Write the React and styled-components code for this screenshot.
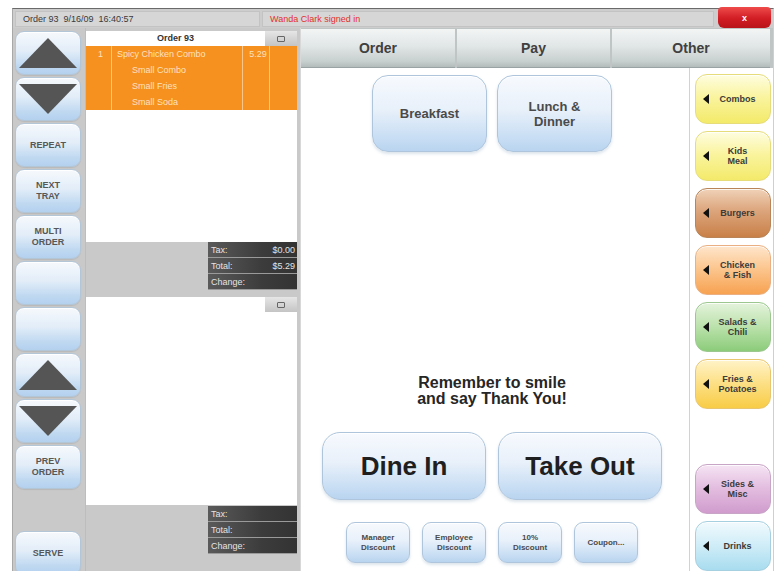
import React from "react";
import styled, { createGlobalStyle } from "styled-components";

const GlobalStyle = createGlobalStyle`
  html, body {
    margin: 0;
    padding: 0;
    background: #fff;
  }
  body {
    font-family: "Liberation Sans", Arial, sans-serif;
  }
  * {
    box-sizing: border-box;
  }
`;

const Screen = styled.div`
  width: 778px;
  height: 571px;
  overflow: hidden;
  background: #fff;
  padding: 8px 4px 0 12px;
`;

const Frame = styled.div`
  height: 100%;
  display: flex;
  flex-direction: column;
  background: #c9c9c9;
  border-top: 1px solid #6a6a6a;
  border-left: 1px solid #a8a8a8;
  border-right: 1px solid #cfcfcf;
`;

// Status line across the top
const StatusBar = styled.div`
  height: 19px;
  flex: none;
  display: flex;
  align-items: center;
  background: #cdcdcd;
`;

const StatusField = styled.div`
  height: 16px;
  width: ${(p) => (p.$grow ? "auto" : "245px")};
  flex: ${(p) => (p.$grow ? 1 : "none")};
  margin-left: 2px;
  padding-left: 7px;
  display: flex;
  align-items: center;
  background: #d6d6d6;
  border: 1px solid #c3c3c3;
  font-size: 9px;
  color: ${(p) => p.$tone || "#3a3a3a"};
  white-space: pre;
`;

const CloseButton = styled.div`
  width: 53px;
  height: 21px;
  margin: -2px 2px 0 4px;
  align-self: flex-start;
  border-radius: 4px 4px 6px 6px;
  background: linear-gradient(#ef4b4b, #d11d24 55%, #b9141a);
  color: #fff;
  font-size: 9px;
  font-weight: bold;
  display: flex;
  align-items: center;
  justify-content: center;
`;

const Body = styled.div`
  flex: 1;
  min-height: 0;
  display: grid;
  grid-template-columns: 73px 214px 1fr;
`;

// Left column of action buttons
const SidePanel = styled.div`
  display: flex;
  flex-direction: column;
  gap: 2px;
  padding: 3px 4px 0 2px;
  overflow: hidden;
  border-right: 1px solid #bdbdbd;
`;

const SideButton = styled.div`
  height: 44px;
  flex: none;
  border-radius: 9px;
  border: 1px solid #b3c6d8;
  background: linear-gradient(#f6f9fd, #e2edf8 45%, #c0d9f1 80%, #b3d0ee);
  box-shadow: inset 0 1px 0 #fff, 0 1px 1px rgba(0, 0, 0, 0.08);
  display: flex;
  align-items: center;
  justify-content: center;
  text-align: center;
  font-size: 9px;
  line-height: 11px;
  font-weight: bold;
  color: #575757;
  margin-top: ${(p) => (p.$bottom ? "auto" : "0")};
  margin-bottom: ${(p) => (p.$bottom ? "-4px" : "0")};
`;

const Arrow = ({ dir }) => (
  <svg width="60" height="32" viewBox="0 0 60 32">
    {dir === "up" ? (
      <polygon points="30,1 59,31 1,31" fill="#555" />
    ) : (
      <polygon points="1,1 59,1 30,31" fill="#555" />
    )}
  </svg>
);

// Order lists
const OrderPanel = styled.div`
  display: flex;
  flex-direction: column;
  padding: 3px 3px 0 0;
  background: #c9c9c9;
`;

const OrderBlock = styled.div`
  display: flex;
  flex-direction: column;
  height: ${(p) => (p.$height ? `${p.$height}px` : "auto")};
  flex: ${(p) => (p.$height ? "none" : 1)};
  margin-bottom: ${(p) => (p.$height ? "7px" : "0")};
`;

const OrderHeader = styled.div`
  height: 15px;
  flex: none;
  display: grid;
  grid-template-columns: 1fr 32px;
  background: #fff;
`;

const OrderTitle = styled.div`
  font-size: 9px;
  font-weight: bold;
  color: #333;
  text-align: center;
  line-height: 15px;
`;

const MiniButton = styled.div`
  background: linear-gradient(#e6e6e6, #c4c4c4);
  display: flex;
  align-items: center;
  justify-content: center;
  &::after {
    content: "";
    width: 6px;
    height: 4px;
    border: 1px solid #666;
    border-radius: 1px;
  }
`;

const ItemRow = styled.div`
  height: 16px;
  display: grid;
  grid-template-columns: 26px 131px 27px 27px;
  background: #f6901e;
  font-size: 9px;
  line-height: 16px;
  color: #fde2bf;
`;

const ItemCell = styled.div`
  border-right: 1px solid rgba(255, 235, 205, 0.6);
  padding-left: ${(p) => p.$indent || 4}px;
  text-align: ${(p) => (p.$center ? "center" : "left")};
  white-space: nowrap;
  overflow: hidden;
  &:last-child {
    border-right: none;
  }
`;

const ListFill = styled.div`
  flex: 1;
  background: #fff;
`;

const TotalsArea = styled.div`
  height: ${(p) => (p.$tail ? "auto" : "48px")};
  flex: none;
  padding: ${(p) => (p.$tail ? "1px 0 17px" : "0")};
  display: flex;
  justify-content: flex-end;
  background: #c9c9c9;
`;

const TotalsBox = styled.div`
  width: 89px;
  display: flex;
  flex-direction: column;
`;

const TotalLine = styled.div`
  height: 16px;
  display: flex;
  justify-content: space-between;
  align-items: center;
  padding: 0 2px 0 3px;
  background: linear-gradient(90deg, #5a5a5a, #3c3c3c 60%, #333);
  border-bottom: 1px solid #9a9a9a;
  font-size: 9px;
  color: #e4e4e4;
`;

// Main side: tabs, menu area, categories
const Main = styled.div`
  display: flex;
  flex-direction: column;
  min-height: 0;
  border-left: 1px solid #d8d8d8;
`;

const Tabs = styled.div`
  height: 40px;
  flex: none;
  display: grid;
  grid-template-columns: 154px 153px 158px;
  gap: 2px;
  padding: 1px 0 0 0;
  background: #bfc4c4;
`;

const Tab = styled.div`
  display: flex;
  align-items: center;
  justify-content: center;
  background: linear-gradient(#f3f5f5, #e1e6e6 45%, #c8cfcf 85%, #b4bbbb);
  border-bottom: 1px solid #9aa3a3;
  font-size: 14px;
  font-weight: bold;
  color: #404040;
`;

const Content = styled.div`
  flex: 1;
  min-height: 0;
  display: flex;
  background: #fff;
`;

const MenuArea = styled.div`
  flex: 1;
  display: flex;
  flex-direction: column;
  align-items: center;
  padding: 7px 6px 8px 0;
`;

const ButtonRow = styled.div`
  display: flex;
  gap: ${(p) => p.$gap}px;
  margin-top: ${(p) => p.$top || 0}px;
`;

const BlueButton = styled.div`
  width: ${(p) => p.$w}px;
  height: ${(p) => p.$h}px;
  border-radius: ${(p) => p.$r}px;
  border: 1px solid #aec5dc;
  background: linear-gradient(#f7fafe, #e8f0fa 45%, #cadff4 80%, #b9d4f0);
  box-shadow: inset 0 1px 0 #fff, 0 2px 3px rgba(120, 150, 180, 0.25);
  display: flex;
  align-items: center;
  justify-content: center;
  text-align: center;
  font-weight: bold;
  font-size: ${(p) => p.$size}px;
  line-height: ${(p) => p.$size + 2}px;
  color: ${(p) => (p.$size > 20 ? "#1f1f1f" : "#4a4a4a")};
`;

const Spacer = styled.div`
  flex: 1;
`;

const Message = styled.div`
  font-size: 16px;
  line-height: 16px;
  font-weight: bold;
  color: #262626;
  text-align: center;
`;

const CategoryColumn = styled.div`
  width: 84px;
  flex: none;
  display: flex;
  flex-direction: column;
  gap: 7px;
  padding: 6px 2px 0 5px;
  border-left: 1px solid #d2d2d2;
`;

const palette = {
  yellow: ["#fefde0", "#faf4a0", "#f3ea6a", "#e6dc7a"],
  brown: ["#f0d2b8", "#dca57c", "#c98048", "#b88458"],
  orange: ["#fee6cc", "#fcc791", "#f7a251", "#eab083"],
  green: ["#e4f3dc", "#bfe3b0", "#8ccc7a", "#9cc890"],
  gold: ["#fff3c8", "#fde18a", "#f8cc45", "#e8c670"],
  purple: ["#f5e4f3", "#e4bfe1", "#d09ccd", "#c8a4c6"],
  sky: ["#f1fafd", "#d2eef8", "#a8dcef", "#a6cfe0"],
};

const CategoryButton = styled.div`
  height: 50px;
  flex: none;
  border-radius: 12px;
  border: 1px solid ${(p) => palette[p.$tone][3]};
  background: linear-gradient(
    ${(p) => palette[p.$tone][0]},
    ${(p) => palette[p.$tone][1]} 45%,
    ${(p) => palette[p.$tone][2]}
  );
  box-shadow: inset 0 1px 0 rgba(255, 255, 255, 0.8);
  display: flex;
  align-items: center;
  padding: 0 4px 0 7px;
`;

const Pointer = styled.span`
  width: 0;
  height: 0;
  flex: none;
  border-top: 5px solid transparent;
  border-bottom: 5px solid transparent;
  border-right: 6px solid #111;
`;

const CategoryLabel = styled.span`
  flex: 1;
  text-align: center;
  font-size: 9px;
  line-height: 10px;
  font-weight: bold;
  color: #3b3b3b;
`;

const orders = [
  {
    title: "Order 93",
    height: 259,
    items: [
      ["1", "Spicy Chicken Combo", "5.29"],
      ["", "Small Combo", ""],
      ["", "Small Fries", ""],
      ["", "Small Soda", ""],
    ],
    totals: [
      ["Tax:", "$0.00"],
      ["Total:", "$5.29"],
      ["Change:", ""],
    ],
  },
  {
    title: "",
    items: [],
    totals: [
      ["Tax:", ""],
      ["Total:", ""],
      ["Change:", ""],
    ],
  },
];

const categories = [
  { label: "Combos", tone: "yellow" },
  { label: "Kids\nMeal", tone: "yellow" },
  { label: "Burgers", tone: "brown" },
  { label: "Chicken\n& Fish", tone: "orange" },
  { label: "Salads &\nChili", tone: "green" },
  { label: "Fries &\nPotatoes", tone: "gold" },
  null,
  { label: "Sides &\nMisc", tone: "purple" },
  { label: "Drinks", tone: "sky" },
];

const lines = (text) =>
  text.split("\n").map((t, i) => (
    <React.Fragment key={i}>
      {i > 0 && <br />}
      {t}
    </React.Fragment>
  ));

export default function App() {
  return (
    <>
      <GlobalStyle />
      <Screen>
        <Frame>
          <StatusBar>
            <StatusField>{"Order 93  9/16/09  16:40:57"}</StatusField>
            <StatusField $grow $tone="#e3302c">
              Wanda Clark signed in
            </StatusField>
            <CloseButton>x</CloseButton>
          </StatusBar>

          <Body>
            <SidePanel>
              <SideButton>
                <Arrow dir="up" />
              </SideButton>
              <SideButton>
                <Arrow dir="down" />
              </SideButton>
              <SideButton>REPEAT</SideButton>
              <SideButton>
                NEXT
                <br />
                TRAY
              </SideButton>
              <SideButton>
                MULTI
                <br />
                ORDER
              </SideButton>
              <SideButton />
              <SideButton />
              <SideButton>
                <Arrow dir="up" />
              </SideButton>
              <SideButton>
                <Arrow dir="down" />
              </SideButton>
              <SideButton>
                PREV
                <br />
                ORDER
              </SideButton>
              <SideButton $bottom>SERVE</SideButton>
            </SidePanel>

            <OrderPanel>
              {orders.map((order, oi) => (
                <OrderBlock key={oi} $height={order.height}>
                  <OrderHeader>
                    <OrderTitle>{order.title}</OrderTitle>
                    <MiniButton />
                  </OrderHeader>
                  {order.items.map(([qty, name, price], i) => (
                    <ItemRow key={i}>
                      <ItemCell $center $indent={0}>
                        {qty}
                      </ItemCell>
                      <ItemCell $indent={qty ? 5 : 20}>{name}</ItemCell>
                      <ItemCell $center $indent={0}>
                        {price}
                      </ItemCell>
                      <ItemCell />
                    </ItemRow>
                  ))}
                  <ListFill />
                  <TotalsArea $tail={!order.height}>
                    <TotalsBox>
                      {order.totals.map(([label, value]) => (
                        <TotalLine key={label}>
                          <span>{label}</span>
                          <span>{value}</span>
                        </TotalLine>
                      ))}
                    </TotalsBox>
                  </TotalsArea>
                </OrderBlock>
              ))}
            </OrderPanel>

            <Main>
              <Tabs>
                <Tab>Order</Tab>
                <Tab>Pay</Tab>
                <Tab>Other</Tab>
              </Tabs>
              <Content>
                <MenuArea>
                  <ButtonRow $gap={10}>
                    <BlueButton $w={115} $h={77} $r={16} $size={13}>
                      Breakfast
                    </BlueButton>
                    <BlueButton $w={115} $h={77} $r={16} $size={13}>
                      Lunch &amp;
                      <br />
                      Dinner
                    </BlueButton>
                  </ButtonRow>
                  <Spacer />
                  <Message>
                    Remember to smile
                    <br />
                    and say Thank You!
                  </Message>
                  <ButtonRow $gap={12} $top={25}>
                    <BlueButton $w={164} $h={68} $r={18} $size={26}>
                      Dine In
                    </BlueButton>
                    <BlueButton $w={164} $h={68} $r={18} $size={26}>
                      Take Out
                    </BlueButton>
                  </ButtonRow>
                  <ButtonRow $gap={12} $top={22}>
                    <BlueButton $w={64} $h={41} $r={9} $size={8}>
                      Manager
                      <br />
                      Discount
                    </BlueButton>
                    <BlueButton $w={64} $h={41} $r={9} $size={8}>
                      Employee
                      <br />
                      Discount
                    </BlueButton>
                    <BlueButton $w={64} $h={41} $r={9} $size={8}>
                      10%
                      <br />
                      Discount
                    </BlueButton>
                    <BlueButton $w={64} $h={41} $r={9} $size={8}>
                      Coupon...
                    </BlueButton>
                  </ButtonRow>
                </MenuArea>

                <CategoryColumn>
                  {categories.map((c, i) =>
                    c ? (
                      <CategoryButton key={i} $tone={c.tone}>
                        <Pointer />
                        <CategoryLabel>{lines(c.label)}</CategoryLabel>
                      </CategoryButton>
                    ) : (
                      <Spacer key={i} />
                    )
                  )}
                </CategoryColumn>
              </Content>
            </Main>
          </Body>
        </Frame>
      </Screen>
    </>
  );
}
